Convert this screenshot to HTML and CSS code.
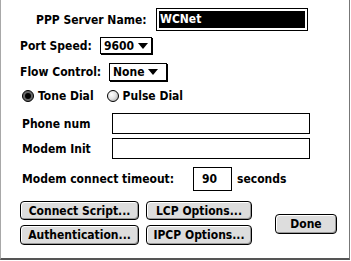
FILE: index.html
```html
<!DOCTYPE html>
<html lang="en">
<head>
    <meta charset="UTF-8">
    <title>PPP Server</title>
    <link rel="stylesheet" href="styles.css">
</head>
<body>
    <div class="window">
        <div class="row row-server">
            <span class="label label-server">PPP Server Name:</span>
            <div class="field field-server"><span class="selected">WCNet</span></div>
        </div>

        <div class="row row-speed">
            <span class="label label-speed">Port Speed:</span>
            <div class="popup popup-speed">9600 <span class="arrow"></span></div>
        </div>

        <div class="row row-flow">
            <span class="label label-flow">Flow Control:</span>
            <div class="popup popup-flow">None <span class="arrow"></span></div>
        </div>

        <div class="row row-radio">
            <span class="radio checked"></span><span class="radio-label">Tone Dial</span>
            <span class="radio"></span><span class="radio-label">Pulse Dial</span>
        </div>

        <div class="row row-phone">
            <span class="label label-input">Phone num</span>
            <div class="field field-wide"></div>
        </div>

        <div class="row row-init">
            <span class="label label-input">Modem Init</span>
            <div class="field field-wide"></div>
        </div>

        <div class="row row-timeout">
            <span class="label label-timeout">Modem connect timeout:</span>
            <div class="field field-timeout">90</div>
            <span class="suffix">seconds</span>
        </div>

        <div class="row row-buttons">
            <div class="button-grid">
                <button class="btn">Connect Script...</button>
                <button class="btn">LCP Options...</button>
                <button class="btn">Authentication...</button>
                <button class="btn">IPCP Options...</button>
            </div>
            <button class="btn btn-done">Done</button>
        </div>
    </div>
</body>
</html>
```

FILE: styles.css
```css
* {
    margin: 0;
    padding: 0;
    box-sizing: border-box;
}

body {
    background: #fff;
    font-family: "DejaVu Sans Condensed", "DejaVu Sans", sans-serif;
    font-weight: bold;
    font-size: 12px;
    color: #000;
}

.window {
    width: 350px;
    height: 260px;
    border-left: 1px solid #a8a8a8;
    border-right: 1px solid #777;
    border-bottom: 2px solid #555;
    overflow: hidden;
}

.row {
    display: flex;
    align-items: center;
}

.label {
    white-space: nowrap;
}

/* server name */
.row-server {
    margin-top: 8px;
    height: 23px;
    padding-left: 35px;
}

.label-server {
    width: 120px;
}

.field {
    border: 1px solid #000;
    background: #fff;
    height: 100%;
}

.field-server {
    width: 152px;
    padding: 2px;
}

.selected {
    display: block;
    height: 100%;
    background: #000;
    color: #fff;
    padding-left: 1px;
    line-height: 17px;
}

/* popups */
.row-speed {
    margin-top: 6px;
    height: 17px;
    padding-left: 19px;
}

.label-speed {
    width: 80px;
}

.row-flow {
    margin-top: 9px;
    height: 18px;
    padding-left: 19px;
}

.label-flow {
    width: 89px;
}

.popup {
    height: 100%;
    border: 1px solid #000;
    box-shadow: 1px 1px 0 #000;
    display: flex;
    align-items: center;
    padding-left: 3px;
    gap: 4px;
}

.popup-speed {
    width: 52px;
}

.popup-flow {
    width: 58px;
}

.arrow {
    width: 0;
    height: 0;
    border-left: 5px solid transparent;
    border-right: 5px solid transparent;
    border-top: 6px solid #000;
}

/* radios */
.row-radio {
    margin-top: 9px;
    height: 11px;
    padding-left: 21px;
}

.radio {
    width: 12px;
    height: 12px;
    border-radius: 50%;
    border: 1px solid #000;
    background: radial-gradient(circle at 35% 35%, #fff 0, #e4e4e4 45%, #999 100%);
    position: relative;
}

.radio.checked {
    background: #666;
}

.radio.checked::after {
    content: "";
    position: absolute;
    left: 2px;
    top: 2px;
    width: 6px;
    height: 6px;
    border-radius: 50%;
    background: #000;
}

.radio-label {
    margin-left: 4px;
    margin-right: 13px;
}

/* text inputs */
.row-phone {
    margin-top: 12px;
    height: 21px;
    padding-left: 21px;
}

.row-init {
    margin-top: 4px;
    height: 21px;
    padding-left: 21px;
}

.label-input {
    width: 90px;
}

.field-wide {
    width: 198px;
}

.row-timeout {
    margin-top: 8px;
    height: 24px;
    padding-left: 21px;
}

.label-timeout {
    width: 171px;
}

.field-timeout {
    width: 39px;
    padding-left: 8px;
    line-height: 22px;
}

.suffix {
    margin-left: 5px;
}

/* buttons */
.row-buttons {
    margin-top: 10px;
    padding-left: 19px;
    align-items: center;
}

.button-grid {
    display: grid;
    grid-template-columns: 119px 106px;
    grid-template-rows: 19px 20px;
    column-gap: 7px;
    row-gap: 5px;
}

.btn {
    font-family: inherit;
    font-weight: bold;
    font-size: 12px;
    color: #000;
    border: 1px solid #000;
    border-radius: 4px;
    background: #ddd;
    box-shadow: inset 1px 1px 0 #fff, inset -1px -1px 0 #999;
}

.btn-done {
    width: 62px;
    height: 20px;
    margin-left: 23px;
    margin-top: 2px;
}
```
